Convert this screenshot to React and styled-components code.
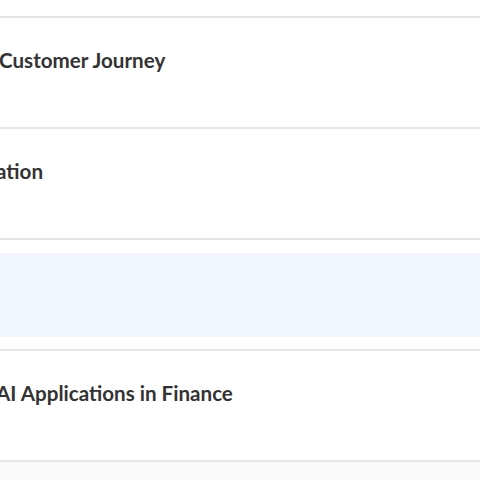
import React from 'react'
import styled, { createGlobalStyle } from 'styled-components'

const GlobalStyle = createGlobalStyle`
    html, body {
        margin: 0;
        padding: 0;
        background: #ffffff;
        overflow: hidden;
    }
    body {
        font-family: "Lato", "Open Sans", sans-serif;
    }
`

const items = [
    { id: 1, title: 'Customer Journey', shift: -1 },
    { id: 2, title: 'ation', shift: -4 },
    { id: 3, title: '', active: true },
    { id: 4, title: 'AI Applications in Finance', shift: -4 },
    { id: 5, title: '', muted: true },
]

const App = () => {
    return (
        <>
            <GlobalStyle />
            <Page>
                <List>
                    {items.map((item) => (
                        <Card key={item.id} $muted={item.muted}>
                            <Inner $active={item.active}>
                                {item.title && (
                                    <Title $shift={item.shift}>{item.title}</Title>
                                )}
                            </Inner>
                        </Card>
                    ))}
                </List>
            </Page>
        </>
    )
}

export default App

const Page = styled.div`
    width: 480px;
    height: 480px;
    overflow: hidden;
    padding-top: 16px;
    box-sizing: border-box;
    background: #ffffff;
`

const List = styled.div`
    display: flex;
    flex-direction: column;
`

const Card = styled.div`
    flex: none;
    height: 111px;
    box-sizing: border-box;
    border-top: 2px solid #e6e6e6;
    padding: 13px 0 12px;
    background: ${(p) => (p.$muted ? '#f9f9f9' : '#ffffff')};
`

const Inner = styled.div`
    height: 84px;
    box-sizing: border-box;
    padding-top: 15px;
    background: ${(p) => (p.$active ? '#f2f6fe' : 'transparent')};
`

const Title = styled.h3`
    margin: 0 0 0 ${(p) => p.$shift || 0}px;
    font-size: 20.6px;
    line-height: 28px;
    font-weight: 700;
    color: #333333;
    white-space: nowrap;
`
